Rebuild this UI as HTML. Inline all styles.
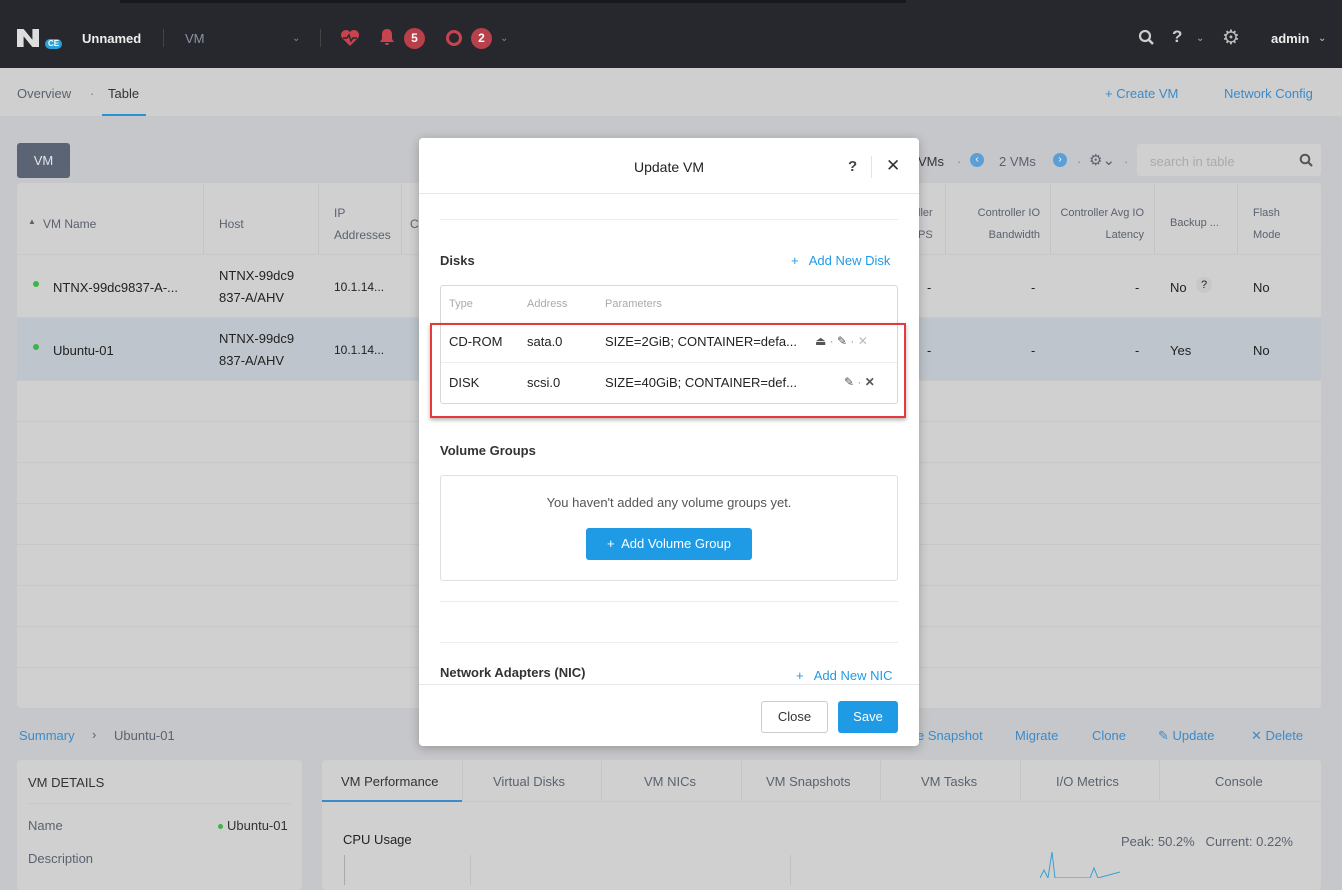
<!DOCTYPE html>
<html><head><meta charset="utf-8"><style>
*{box-sizing:border-box;margin:0;padding:0}
body{width:1342px;height:878px;overflow:hidden;background:#c6c7ca;font-family:"Liberation Sans",sans-serif;font-size:13px;color:#222;position:relative}
.a{position:absolute;white-space:nowrap}
.lnk{color:#3a8bcc}
.g{color:#5a6270}
.hdr{background:#26282d;left:0;top:0;width:1342px;height:68px}
.nav{background:#cfcfcf;left:0;top:68px;width:1342px;height:48px}
.tbl{background:#d0d0d0;left:17px;top:183px;width:1304px;height:525px;border-radius:4px}
.hl{background:#c8c8c8;height:1px}
.modal{background:#fff;left:419px;top:138px;width:500px;height:608px;border-radius:4px;box-shadow:0 2px 10px rgba(0,0,0,.25)}
.m{color:#1f9be6}
</style></head><body>
<div class="a hdr"></div>
<div class="a" style="left:120px;top:0;width:786px;height:3px;background:#17181b"></div>
<div class="a" style="left:17px;top:29px;width:22px;height:18px;background:#ddd;clip-path:polygon(0 0,30% 0,70% 60%,70% 0,100% 0,100% 100%,70% 100%,30% 40%,30% 100%,0 100%)"></div>
<div class="a" style="left:43px;top:37px;width:21px;height:14px;border-radius:7px;background:#2aa0d8;border:2px solid #26282d;color:#fff;font-size:8px;font-weight:bold;text-align:center;line-height:10px">CE</div>
<div class="a" style="left:82px;top:31px;color:#eee;font-weight:bold;font-size:13px">Unnamed</div>
<div class="a" style="left:163px;top:29px;width:1px;height:18px;background:#444"></div>
<div class="a" style="left:185px;top:31px;color:#8a94a4;font-size:13px">VM</div>
<div class="a" style="left:292px;top:33px;color:#888;font-size:10px">⌄</div>
<div class="a" style="left:320px;top:29px;width:1px;height:18px;background:#444"></div>
<svg class="a" style="left:340px;top:29px" width="20" height="18" viewBox="0 0 20 18"><path d="M10 17 L2 9 A5 5 0 0 1 10 3 A5 5 0 0 1 18 9 Z" fill="#c9434f"/><path d="M3 9 H7 L9 6 L11 12 L13 9 H17" stroke="#26282d" stroke-width="1.4" fill="none"/></svg>
<svg class="a" style="left:379px;top:28px" width="16" height="18" viewBox="0 0 16 18"><path d="M8 1 C4 1 3 4 3 7 V11 L1 14 H15 L13 11 V7 C13 4 12 1 8 1Z M6 15 H10 A2 2 0 0 1 6 15Z" fill="#c9434f"/></svg>
<div class="a" style="left:404px;top:28px;width:21px;height:21px;border-radius:50%;background:#b8404b;color:#fff;font-size:12px;font-weight:bold;text-align:center;line-height:21px">5</div>
<div class="a" style="left:446px;top:30px;width:16px;height:16px;border-radius:50%;border:3.5px solid #c9434f"></div>
<div class="a" style="left:471px;top:28px;width:21px;height:21px;border-radius:50%;background:#b8404b;color:#fff;font-size:12px;font-weight:bold;text-align:center;line-height:21px">2</div>
<div class="a" style="left:500px;top:33px;color:#888;font-size:10px">⌄</div>
<svg class="a" style="left:1138px;top:29px" width="17" height="17" viewBox="0 0 17 17"><circle cx="7" cy="7" r="5" stroke="#ccc" stroke-width="2.2" fill="none"/><path d="M11 11 L15 15" stroke="#ccc" stroke-width="2.6"/></svg>
<div class="a" style="left:1172px;top:27px;color:#ccc;font-size:17px;font-weight:bold">?</div>
<div class="a" style="left:1196px;top:33px;color:#aaa;font-size:10px">⌄</div>
<div class="a" style="left:1222px;top:25px;color:#bbb;font-size:20px">⚙</div>
<div class="a" style="left:1271px;top:31px;color:#eee;font-weight:bold">admin</div>
<div class="a" style="left:1318px;top:33px;color:#ccc;font-size:10px">⌄</div>

<div class="a nav"></div>
<div class="a g" style="left:17px;top:86px">Overview</div>
<div class="a" style="left:90px;top:86px;color:#777">·</div>
<div class="a" style="left:108px;top:86px;color:#333">Table</div>
<div class="a" style="left:102px;top:114px;width:44px;height:2px;background:#2b8fd0"></div>
<div class="a lnk" style="left:1105px;top:86px">+ Create VM</div>
<div class="a lnk" style="left:1224px;top:86px">Network Config</div>

<div class="a" style="left:17px;top:143px;width:53px;height:35px;background:#5a6475;border-radius:3px;color:#e6e6e6;text-align:center;line-height:35px">VM</div>
<div class="a g" style="left:918px;top:154px;color:#333">VMs</div>
<div class="a" style="left:957px;top:154px;color:#888">·</div>
<div class="a" style="left:970px;top:153px;width:14px;height:14px;border-radius:50%;background:#5b9fd6;color:#fff;font-size:10px;text-align:center;line-height:13px">‹</div>
<div class="a g" style="left:999px;top:154px">2 VMs</div>
<div class="a" style="left:1053px;top:153px;width:14px;height:14px;border-radius:50%;background:#5b9fd6;color:#fff;font-size:10px;text-align:center;line-height:13px">›</div>
<div class="a" style="left:1077px;top:154px;color:#888">·</div>
<div class="a g" style="left:1089px;top:151px;font-size:15px">⚙⌄</div>
<div class="a" style="left:1124px;top:154px;color:#888">·</div>
<div class="a" style="left:1137px;top:144px;width:184px;height:32px;background:#d0d0d0;border-radius:3px"></div>
<div class="a" style="left:1150px;top:154px;color:#aaa">search in table</div>
<svg class="a" style="left:1299px;top:153px" width="14" height="14" viewBox="0 0 14 14"><circle cx="6" cy="6" r="4.3" stroke="#555" stroke-width="2" fill="none"/><path d="M9 9 L13 13" stroke="#555" stroke-width="2.2"/></svg>

<div class="a tbl"></div>
<div class="a" style="left:17px;top:317px;width:1304px;height:63px;background:#bfc5cc"></div>
<div class="a hl" style="left:17px;top:254px;width:1304px"></div>
<div class="a hl" style="left:17px;top:317px;width:1304px"></div>
<div class="a hl" style="left:17px;top:380px;width:1304px"></div>
<div class="a hl" style="left:17px;top:421px;width:1304px"></div>
<div class="a hl" style="left:17px;top:462px;width:1304px"></div>
<div class="a hl" style="left:17px;top:503px;width:1304px"></div>
<div class="a hl" style="left:17px;top:544px;width:1304px"></div>
<div class="a hl" style="left:17px;top:585px;width:1304px"></div>
<div class="a hl" style="left:17px;top:626px;width:1304px"></div>
<div class="a hl" style="left:17px;top:667px;width:1304px"></div>
<div class="a" style="left:203px;top:184px;width:1px;height:70px;background:#c4c4c4"></div>
<div class="a" style="left:318px;top:184px;width:1px;height:70px;background:#c4c4c4"></div>
<div class="a" style="left:401px;top:184px;width:1px;height:70px;background:#c4c4c4"></div>
<div class="a" style="left:945px;top:184px;width:1px;height:70px;background:#c4c4c4"></div>
<div class="a" style="left:1050px;top:184px;width:1px;height:70px;background:#c4c4c4"></div>
<div class="a" style="left:1154px;top:184px;width:1px;height:70px;background:#c4c4c4"></div>
<div class="a" style="left:1237px;top:184px;width:1px;height:70px;background:#c4c4c4"></div>
<div class="a g" style="left:28px;top:217px;font-size:8px">▲</div>
<div class="a g" style="left:43px;top:217px;font-size:12px">VM Name</div>
<div class="a g" style="left:219px;top:217px;font-size:12px">Host</div>
<div class="a g" style="left:334px;top:202px;font-size:12px;line-height:22px">IP<br>Addresses</div>
<div class="a g" style="left:410px;top:217px;font-size:12px">C</div>
<div class="a g" style="left:918px;top:202px;font-size:11px;line-height:22px">ller<br>PS</div>
<div class="a g" style="left:960px;top:202px;font-size:11px;line-height:22px;text-align:right;width:80px">Controller IO<br>Bandwidth</div>
<div class="a g" style="left:1050px;top:202px;font-size:11px;line-height:22px;text-align:right;width:94px">Controller Avg IO<br>Latency</div>
<div class="a g" style="left:1170px;top:217px;font-size:11px">Backup ...</div>
<div class="a g" style="left:1253px;top:202px;font-size:11px;line-height:22px">Flash<br>Mode</div>

<div class="a" style="left:33px;top:281px;width:6px;height:6px;border-radius:50%;background:#3cb44b"></div>
<div class="a" style="left:53px;top:280px">NTNX-99dc9837-A-...</div>
<div class="a" style="left:219px;top:265px;line-height:22px">NTNX-99dc9<br>837-A/AHV</div>
<div class="a" style="left:334px;top:280px;font-size:12px">10.1.14...</div>
<div class="a" style="left:927px;top:280px">-</div><div class="a" style="left:1031px;top:280px">-</div><div class="a" style="left:1135px;top:280px">-</div>
<div class="a" style="left:1170px;top:280px">No</div>
<div class="a" style="left:1196px;top:277px;width:16px;height:16px;border-radius:50%;background:#c8c8c8;text-align:center;line-height:16px;font-size:11px">?</div>
<div class="a" style="left:1253px;top:280px">No</div>
<div class="a" style="left:33px;top:344px;width:6px;height:6px;border-radius:50%;background:#3cb44b"></div>
<div class="a" style="left:53px;top:343px">Ubuntu-01</div>
<div class="a" style="left:219px;top:328px;line-height:22px">NTNX-99dc9<br>837-A/AHV</div>
<div class="a" style="left:334px;top:343px;font-size:12px">10.1.14...</div>
<div class="a" style="left:927px;top:343px">-</div><div class="a" style="left:1031px;top:343px">-</div><div class="a" style="left:1135px;top:343px">-</div>
<div class="a" style="left:1170px;top:343px">Yes</div>
<div class="a" style="left:1253px;top:343px">No</div>

<div class="a lnk" style="left:19px;top:728px">Summary</div>
<div class="a g" style="left:92px;top:727px">›</div>
<div class="a g" style="left:114px;top:728px">Ubuntu-01</div>
<div class="a lnk" style="left:917px;top:728px">e Snapshot</div>
<div class="a lnk" style="left:1015px;top:728px">Migrate</div>
<div class="a lnk" style="left:1092px;top:728px">Clone</div>
<div class="a lnk" style="left:1158px;top:728px">✎ Update</div>
<div class="a lnk" style="left:1251px;top:728px">✕ Delete</div>

<div class="a" style="left:17px;top:760px;width:285px;height:130px;background:#d0d0d0;border-radius:4px"></div>
<div class="a" style="left:28px;top:775px;color:#333">VM DETAILS</div>
<div class="a hl" style="left:28px;top:803px;width:263px"></div>
<div class="a g" style="left:28px;top:818px">Name</div>
<div class="a" style="left:218px;top:824px;width:5px;height:5px;border-radius:50%;background:#3cb44b"></div>
<div class="a" style="left:227px;top:818px;color:#333">Ubuntu-01</div>
<div class="a g" style="left:28px;top:851px">Description</div>

<div class="a" style="left:322px;top:760px;width:999px;height:130px;background:#d0d0d0;border-radius:4px"></div>
<div class="a hl" style="left:322px;top:801px;width:999px"></div>
<div class="a" style="left:322px;top:800px;width:140px;height:2px;background:#3a8bcc"></div>
<div class="a" style="left:341px;top:774px;color:#333">VM Performance</div>
<div class="a g" style="left:493px;top:774px">Virtual Disks</div>
<div class="a g" style="left:644px;top:774px">VM NICs</div>
<div class="a g" style="left:766px;top:774px">VM Snapshots</div>
<div class="a g" style="left:921px;top:774px">VM Tasks</div>
<div class="a g" style="left:1056px;top:774px">I/O Metrics</div>
<div class="a g" style="left:1215px;top:774px">Console</div>
<div class="a" style="left:462px;top:761px;width:1px;height:40px;background:#c4c4c4"></div>
<div class="a" style="left:601px;top:761px;width:1px;height:40px;background:#c4c4c4"></div>
<div class="a" style="left:741px;top:761px;width:1px;height:40px;background:#c4c4c4"></div>
<div class="a" style="left:880px;top:761px;width:1px;height:40px;background:#c4c4c4"></div>
<div class="a" style="left:1020px;top:761px;width:1px;height:40px;background:#c4c4c4"></div>
<div class="a" style="left:1159px;top:761px;width:1px;height:40px;background:#c4c4c4"></div>
<div class="a" style="left:343px;top:832px;color:#222">CPU Usage</div>
<div class="a g" style="left:1121px;top:834px">Peak: 50.2%&nbsp;&nbsp; Current: 0.22%</div>
<div class="a" style="left:344px;top:855px;width:1px;height:30px;background:#aaa"></div>
<div class="a" style="left:470px;top:855px;width:1px;height:30px;background:#c0c0c0"></div>
<div class="a" style="left:790px;top:855px;width:1px;height:30px;background:#c0c0c0"></div>
<svg class="a" style="left:1040px;top:850px" width="80" height="28"><path d="M0 28 L4 20 L8 28 L12 2 L15 28 L50 28 L54 18 L58 28 L80 22" stroke="#3aa0d0" fill="none"/></svg>

<div class="a modal"></div>
<div class="a" style="left:634px;top:159px;font-size:14px;color:#222">Update VM</div>
<div class="a" style="left:848px;top:158px;font-size:15px;font-weight:bold;color:#444">?</div>
<div class="a" style="left:871px;top:156px;width:1px;height:22px;background:#e4e4e4"></div>
<div class="a" style="left:886px;top:156px;font-size:17px;color:#333">✕</div>
<div class="a" style="left:419px;top:193px;width:500px;height:1px;background:#e8e8e8"></div>
<div class="a" style="left:440px;top:219px;width:458px;height:1px;background:#ececec"></div>
<div class="a" style="left:440px;top:253px;font-weight:bold;color:#333">Disks</div>
<div class="a m" style="left:791px;top:253px">+&nbsp;&nbsp; Add New Disk</div>
<div class="a" style="left:440px;top:285px;width:458px;height:119px;border:1px solid #d8d8d8;border-radius:3px"></div>
<div class="a" style="left:449px;top:298px;font-size:11px;color:#aaa">Type</div>
<div class="a" style="left:527px;top:298px;font-size:11px;color:#aaa">Address</div>
<div class="a" style="left:605px;top:298px;font-size:11px;color:#aaa">Parameters</div>
<div class="a" style="left:441px;top:362px;width:456px;height:1px;background:#eee"></div>
<div class="a" style="left:449px;top:334px">CD-ROM</div>
<div class="a" style="left:527px;top:334px">sata.0</div>
<div class="a" style="left:605px;top:334px">SIZE=2GiB; CONTAINER=defa...</div>
<div class="a" style="left:815px;top:334px;color:#555;font-size:12px">⏏ <span style="color:#999">·</span> ✎ <span style="color:#999">·</span> <span style="color:#bbb">✕</span></div>
<div class="a" style="left:449px;top:375px">DISK</div>
<div class="a" style="left:527px;top:375px">scsi.0</div>
<div class="a" style="left:605px;top:375px">SIZE=40GiB; CONTAINER=def...</div>
<div class="a" style="left:844px;top:375px;color:#555;font-size:12px">✎ <span style="color:#999">·</span> <b>✕</b></div>
<div class="a" style="left:430px;top:323px;width:476px;height:95px;border:2px solid #e5393b;box-shadow:0 2px 4px rgba(0,0,0,.3)"></div>
<div class="a" style="left:440px;top:443px;font-weight:bold;color:#333">Volume Groups</div>
<div class="a" style="left:440px;top:475px;width:458px;height:106px;border:1px solid #e0e0e0;border-radius:3px"></div>
<div class="a" style="left:440px;top:495px;width:458px;text-align:center;color:#555">You haven't added any volume groups yet.</div>
<div class="a" style="left:586px;top:528px;width:166px;height:32px;background:#1f9be6;border-radius:3px;color:#fff;text-align:center;line-height:32px">+&nbsp; Add Volume Group</div>
<div class="a" style="left:440px;top:601px;width:458px;height:1px;background:#ececec"></div>
<div class="a" style="left:440px;top:642px;width:458px;height:1px;background:#ececec"></div>
<div class="a" style="left:440px;top:665px;font-weight:bold;color:#333">Network Adapters (NIC)</div>
<div class="a m" style="left:796px;top:668px">+&nbsp;&nbsp; Add New NIC</div>
<div class="a" style="left:419px;top:684px;width:500px;height:1px;background:#e8e8e8"></div>
<div class="a" style="left:761px;top:701px;width:67px;height:32px;border:1px solid #ccc;border-radius:3px;text-align:center;line-height:30px;color:#333">Close</div>
<div class="a" style="left:838px;top:701px;width:60px;height:32px;background:#1f9be6;border-radius:3px;text-align:center;line-height:32px;color:#fff">Save</div>
</body></html>
